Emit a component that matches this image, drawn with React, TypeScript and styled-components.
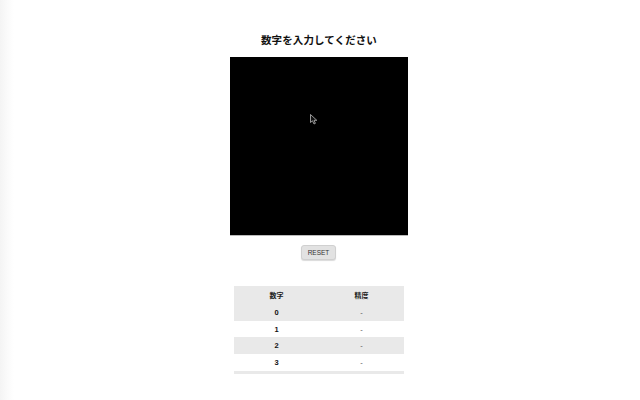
import React from "react";
import styled, { createGlobalStyle } from "styled-components";

const Global = createGlobalStyle`
  html, body { margin: 0; padding: 0; background: #fff; }
  body { font-family: "Liberation Sans", "Noto Sans CJK JP", sans-serif; color: #111; }
`;

const Page = styled.div`
  width: 640px;
  height: 400px;
  overflow: hidden;
  display: flex;
  flex-direction: column;
  align-items: center;
  padding-top: 33px;
  box-sizing: border-box;
  background: linear-gradient(to right, #f4f4f4 0px, #fbfbfb 8px, #fff 14px);
`;

const Title = styled.h1`
  margin: 0 0 10px 0;
  font-size: 10.5px;
  line-height: 14px;
  font-weight: bold;
  font-family: "Noto Sans CJK JP", sans-serif;
  letter-spacing: 0.1px;
  transform: translateX(-1px);
`;

const CanvasBox = styled.div`
  position: relative;
  width: 178px;
  height: 178px;
  background: #000;
  box-shadow: 0 1px 0 #bbb;
  margin-right: 2px;
`;

const Cursor = styled.svg`
  position: absolute;
  left: 80px;
  top: 57px;
`;

const ResetButton = styled.button`
  margin-top: 10px;
  width: 35px;
  height: 15px;
  padding: 0;
  border: 1px solid #d0d0d0;
  border-radius: 3px;
  background: #e2e2e2;
  font-family: "Liberation Sans", sans-serif;
  font-size: 6.5px;
  color: #333;
  box-shadow: 0 1px 1px rgba(0,0,0,0.15);
  margin-right: 3px;
`;

const TableWrap = styled.div`
  margin-top: 26px;
  margin-right: 2px;
  width: 170px;
  display: flex;
  flex-direction: column;
`;

const Table = styled.table`
  width: 170px;
  border-collapse: collapse;
  font-size: 7.5px;
`;

const Row = styled.tr<{ $shade: boolean }>`
  background: ${(p) => (p.$shade ? "#e9e9e9" : "#fff")};
  height: 16.7px;
`;

const HeadRow = styled.tr`
  background: #e9e9e9;
  height: 18px;
`;

const Th = styled.th`
  width: 50%;
  font-weight: bold;
  font-family: "Noto Sans CJK JP", sans-serif;
  font-size: 7px;
  color: #222;
  padding: 0;
`;

const NumCell = styled.td`
  text-align: center;
  font-weight: bold;
  padding: 0;
  color: #111;
`;

const ValCell = styled.td`
  text-align: center;
  padding: 0;
  color: #555;
`;

const NextRowEdge = styled.div`
  height: 3px;
  background: #e9e9e9;
`;

export default function App() {
  const rows = [0, 1, 2, 3];
  return (
    <>
      <Global />
      <Page>
        <Title>数字を入力してください</Title>
        <CanvasBox>
          <Cursor width="8" height="11" viewBox="0 0 8 11">
            <path d="M0.5 0.5 L0.5 8.5 L2.5 6.8 L4 10 L5.4 9.3 L4 6.3 L6.8 6.3 Z" fill="#111" stroke="#bbb" strokeWidth="0.8" />
          </Cursor>
        </CanvasBox>
        <ResetButton>RESET</ResetButton>
        <TableWrap>
          <Table>
            <thead>
              <HeadRow>
                <Th>数字</Th>
                <Th>精度</Th>
              </HeadRow>
            </thead>
            <tbody>
              {rows.map((n) => (
                <Row key={n} $shade={n % 2 === 0}>
                  <NumCell>{n}</NumCell>
                  <ValCell>-</ValCell>
                </Row>
              ))}
            </tbody>
          </Table>
          <NextRowEdge />
        </TableWrap>
      </Page>
    </>
  );
}
